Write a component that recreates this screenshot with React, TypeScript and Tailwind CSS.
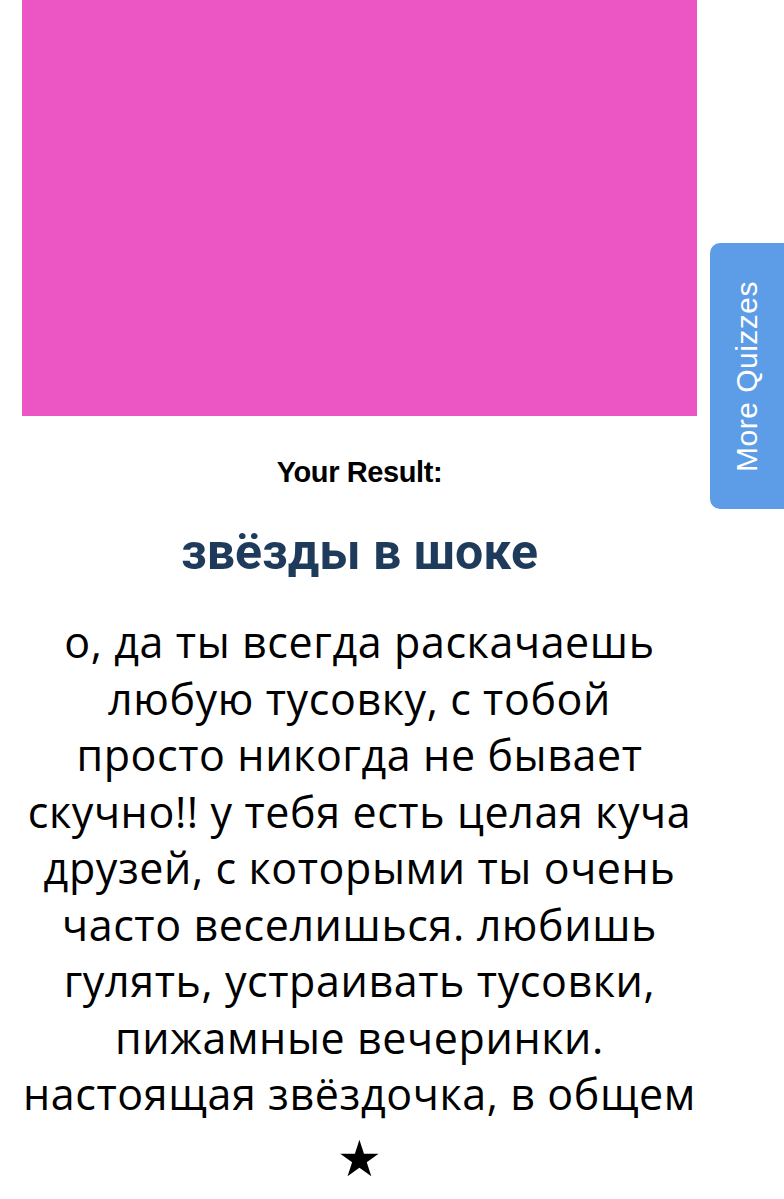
import React from 'react';

const LINES = [
	'о, да ты всегда раскачаешь',
	'любую тусовку, с тобой',
	'просто никогда не бывает',
	'скучно!! у тебя есть целая куча',
	'друзей, с которыми ты очень',
	'часто веселишься. любишь',
	'гулять, устраивать тусовки,',
	'пижамные вечеринки.',
	'настоящая звёздочка, в общем',
];

export default function App() {
	return (
		<div className="relative min-h-[1199px] w-full overflow-hidden bg-white">
			<main className="ml-[22px] flex w-[675px] flex-col items-center">
				<div className="h-[416px] w-full bg-[#ec55c4]" />
				<p className="mt-[39px] font-['Liberation_Sans',sans-serif] text-[29px] font-bold leading-[34px] tracking-[-0.4px] text-black">
					Your Result:
				</p>
				<h2 className="mt-[33px] font-['Roboto',sans-serif] text-[50px] font-bold leading-[60px] text-[#1f3b5c]">
					звёзды в шоке
				</h2>
				<p className="mt-[32px] whitespace-nowrap text-center font-['Open_Sans',sans-serif] text-[43px] leading-[56.5px] tracking-[0.6px] text-black">
					{LINES.map((l) => (
						<span key={l} className="block">
							{l}
						</span>
					))}
				</p>
				<p className="mt-[8px] font-['DejaVu_Sans',sans-serif] text-[50px] leading-[56px] text-black">★</p>
			</main>
			<div className="absolute right-0 top-[243px] flex h-[266px] w-[74px] items-center justify-center rounded-l-[10px] bg-[#5d9ce6]">
				<span className="-rotate-90 whitespace-nowrap font-['Liberation_Sans',sans-serif] text-[30px] tracking-[0.5px] text-white">
					More Quizzes
				</span>
			</div>
		</div>
	);
}
